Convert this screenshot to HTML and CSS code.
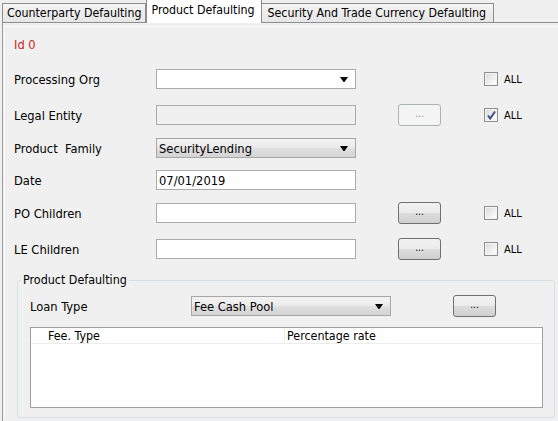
FILE: index.html
```html
<!DOCTYPE html>
<html>
<head>
<meta charset="utf-8">
<link rel="stylesheet" href="styles.css">
</head>
<body>
<div class="tabs">
  <div class="tab first">Counterparty Defaulting</div>
  <div class="tab active">Product Defaulting</div>
  <div class="tab last">Security And Trade Currency Defaulting</div>
</div>
<div class="panel">
  <div class="inner">
    <div class="id">Id 0</div>
    <div class="form">
      <div class="row">
        <span class="label">Processing Org</span>
        <div class="combo white"><span class="val"></span><svg class="arrow" width="8" height="5" viewBox="0 0 8 5"><polygon points="0,0 8,0 4.5,5 3.5,5" fill="#000"/></svg></div>
        <span></span>
        <label class="chk"><span class="box"></span>ALL</label>
      </div>
      <div class="row">
        <span class="label">Legal Entity</span>
        <div class="field disabled"></div>
        <button class="btn dis">...</button>
        <label class="chk"><span class="box"><svg width="11" height="11" viewBox="0 0 11 11"><path d="M2 5.5 L4.2 8.6 L9 1.5" fill="none" stroke="#3f4f86" stroke-width="2"/></svg></span>ALL</label>
      </div>
      <div class="row">
        <span class="label">Product&nbsp; Family</span>
        <div class="combo grad"><span class="val">SecurityLending</span><svg class="arrow" width="8" height="5" viewBox="0 0 8 5"><polygon points="0,0 8,0 4.5,5 3.5,5" fill="#000"/></svg></div>
      </div>
      <div class="row">
        <span class="label">Date</span>
        <div class="field"><span class="val">07/01/2019</span></div>
      </div>
      <div class="row">
        <span class="label">PO Children</span>
        <div class="field"></div>
        <button class="btn">...</button>
        <label class="chk"><span class="box"></span>ALL</label>
      </div>
      <div class="row">
        <span class="label">LE Children</span>
        <div class="field"></div>
        <button class="btn">...</button>
        <label class="chk"><span class="box"></span>ALL</label>
      </div>
    </div>
    <fieldset class="group">
      <legend>Product Defaulting</legend>
      <div class="loan">
        <span class="label">Loan Type</span>
        <div class="combo grad"><span class="val">Fee Cash Pool</span><svg class="arrow" width="8" height="5" viewBox="0 0 8 5"><polygon points="0,0 8,0 4.5,5 3.5,5" fill="#000"/></svg></div>
        <button class="btn">...</button>
      </div>
      <div class="table">
        <div class="thead">
          <div class="th c1">Fee. Type</div>
          <div class="th c2">Percentage rate</div>
        </div>
      </div>
    </fieldset>
  </div>
</div>
</body>
</html>
```

FILE: styles.css
```css
html, body {
  margin: 0;
  padding: 0;
  background: #f0f0f0;
  font-family: "DejaVu Sans Condensed", "DejaVu Sans", sans-serif;
  font-stretch: condensed;
  font-size: 12.8px;
  color: #000;
  width: 558px;
  height: 421px;
  overflow: hidden;
}

.tabs {
  display: flex;
  align-items: flex-end;
  height: 22px;
  padding-left: 2px;
  position: relative;
  z-index: 2;
}

.tab {
  height: 18px;
  line-height: 18px;
  padding: 0 6px 0 6px;
  border: 1px solid #8d8d8d;
  border-bottom: none;
  background: linear-gradient(#f4f4f4, #e6e6e6);
  white-space: nowrap;
  font-size: 12.3px;
}

.tab.first { padding: 0 3px 0 4px; }

.tab.last { padding: 0 7px 0 6px; }

.tab + .tab { border-left: none; }

.tab.active {
  height: 23px;
  line-height: 20px;
  margin-bottom: -1px;
  background: #fff;
  padding: 0 6px 0 5px;
  border-left: 1px solid #8d8d8d;
}

.tab.active + .tab { border-left: none; }

.panel {
  margin-left: 2px;
  border-top: 1px solid #8d8d8d;
  border-left: 1px solid #9a9a9a;
  height: 398px;
}

.inner {
  border-top: 1px solid #fafafa;
  margin-top: 3px;
  border-left: 1px solid #fafafa;
  margin-left: 1px;
  padding-left: 9px;
}

.id {
  color: #cc1f1f;
  line-height: 14px;
  padding-top: 11px;
}

.form {
  margin-top: 16px;
  display: grid;
  grid-template-rows: 36px 33px 32px 33px 36px 22px;
}

.row {
  display: grid;
  grid-template-columns: 142px 242px 86px auto;
  align-items: center;
  height: 22px;
}

.label { white-space: nowrap; }

.field, .combo {
  box-sizing: border-box;
  width: 200px;
  height: 20px;
  border: 1px solid #ababab;
  background: #fff;
  display: flex;
  align-items: center;
  padding-left: 2px;
}

.field.disabled { background: #f0f0f0; }

.combo { justify-content: space-between; padding-right: 7px; }

.combo.grad {
  background: linear-gradient(#f3f3f3, #ececec 45%, #dedede 55%, #d4d4d4);
  border-color: #a7a7a7;
}

.val { white-space: nowrap; }

.arrow { display: block; }

.btn {
  box-sizing: border-box;
  width: 43px;
  height: 22px;
  padding: 0 0 3px;
  margin: 0;
  border: 1px solid #707070;
  border-radius: 3px;
  background: linear-gradient(#f2f2f2, #ebebeb 50%, #dddddd 50%, #cfcfcf);
  font-family: "DejaVu Sans Condensed", "DejaVu Sans", sans-serif;
  font-size: 10px;
  color: #000;
  line-height: 14px;
}

.btn.dis {
  border-color: #adb2b5;
  background: #f4f4f4;
  color: #8a8a8a;
}

.chk {
  display: flex;
  align-items: center;
  gap: 6px;
  font-size: 11px;
}

.box {
  box-sizing: border-box;
  width: 14px;
  height: 14px;
  border: 1px solid #8e8f8f;
  background: linear-gradient(135deg, #d8d8d8, #f6f6f6 70%, #ffffff);
  box-shadow: inset 0 0 0 1px #f4f4f4;
  display: flex;
  align-items: center;
  justify-content: center;
}

.box svg { display: block; }

.group {
  margin: 13px 0 0 3px;
  width: 538px;
  box-sizing: border-box;
  border: 1px solid #d5dfe5;
  border-radius: 3px;
  padding: 0 11px 8px 12px;
  height: 145px;
}

.group legend {
  padding: 0 2px;
  margin-left: -9px;
  line-height: 14px;
  font-size: 12.4px;
}

.loan {
  display: grid;
  grid-template-columns: 161px 262px 43px;
  align-items: center;
  height: 22px;
  margin-top: 8px;
}

.table {
  margin-top: 10px;
  box-sizing: border-box;
  height: 81px;
  border: 1px solid #a0a0a0;
  background: #fff;
}

.thead {
  display: flex;
  height: 15px;
  border-bottom: 1px solid #ececec;
  line-height: 15px;
  font-size: 12.4px;
}

.th.c1 {
  width: 254px;
  padding-left: 17px;
  box-sizing: border-box;
  border-right: 1px solid #ececec;
}

.th.c2 { padding-left: 2px; }
```
